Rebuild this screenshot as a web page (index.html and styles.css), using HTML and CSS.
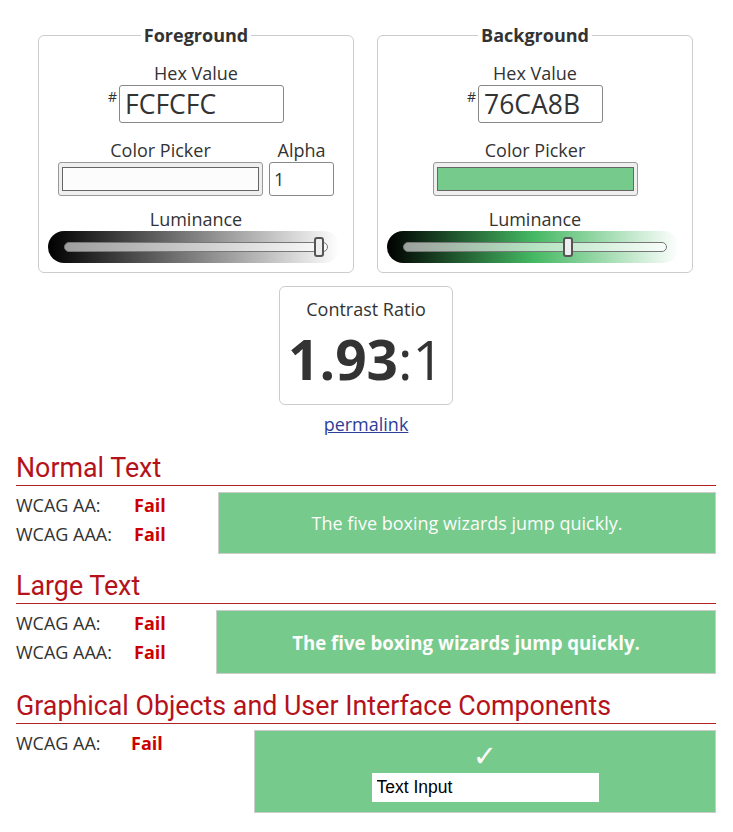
FILE: index.html
```html
<!DOCTYPE html>
<html lang="en">
<head>
<meta charset="utf-8">
<title>Contrast Checker</title>
<link rel="stylesheet" href="styles.css">
</head>
<body>
<div class="pickers">
  <fieldset class="panel">
    <legend class="panel-legend">Foreground</legend>
    <div class="field-label">Hex Value</div>
    <div class="hex-row">
      <span class="hash">#</span>
      <input class="hex-input hex-wide" type="text" value="FCFCFC">
    </div>
    <div class="picker-row">
      <div class="picker-col">
        <div class="field-label">Color Picker</div>
        <div class="swatch-frame"><div class="swatch swatch-fg"></div></div>
      </div>
      <div class="picker-col">
        <div class="field-label">Alpha</div>
        <input class="alpha-input" type="text" value="1">
      </div>
    </div>
    <div class="lum-block">
      <div class="field-label">Luminance</div>
      <div class="lum-track lum-fg">
        <input class="lum-range" type="range" min="0" max="100" value="99">
      </div>
    </div>
  </fieldset>
  <fieldset class="panel">
    <legend class="panel-legend">Background</legend>
    <div class="field-label">Hex Value</div>
    <div class="hex-row">
      <span class="hash">#</span>
      <input class="hex-input hex-narrow" type="text" value="76CA8B">
    </div>
    <div class="picker-row">
      <div class="picker-col">
        <div class="field-label">Color Picker</div>
        <div class="swatch-frame"><div class="swatch swatch-bg"></div></div>
      </div>
    </div>
    <div class="lum-block">
      <div class="field-label">Luminance</div>
      <div class="lum-track lum-bg">
        <input class="lum-range" type="range" min="0" max="100" value="63">
      </div>
    </div>
  </fieldset>
</div>

<div class="ratio-box">
  <div class="ratio-label">Contrast Ratio</div>
  <div class="ratio-value"><span class="ratio-bold">1.93</span>:1</div>
</div>
<div class="permalink-wrap"><a class="permalink" href="#">permalink</a></div>

<h2 class="section-title">Normal Text</h2>
<div class="result-row">
  <div class="results">
    <span>WCAG AA:</span><span class="fail">Fail</span>
    <span>WCAG AAA:</span><span class="fail">Fail</span>
  </div>
  <div class="preview preview-normal">The five boxing wizards jump quickly.</div>
</div>

<h2 class="section-title">Large Text</h2>
<div class="result-row">
  <div class="results">
    <span>WCAG AA:</span><span class="fail">Fail</span>
    <span>WCAG AAA:</span><span class="fail">Fail</span>
  </div>
  <div class="preview preview-large">The five boxing wizards jump quickly.</div>
</div>

<h2 class="section-title">Graphical Objects and User Interface Components</h2>
<div class="result-row">
  <div class="results results-narrow">
    <span>WCAG AA:</span><span class="fail">Fail</span>
  </div>
  <div class="preview preview-graphic">
    <div class="check">✓</div>
    <input class="text-input" type="text" value="Text Input">
  </div>
</div>
</body>
</html>
```
FILE: styles.css
```css
body {
  margin: 0;
  padding: 23px 17px 0 16px;
  font-family: "Open Sans", "Liberation Sans", sans-serif;
  color: #333;
  background: #fff;
}

.pickers {
  display: flex;
  justify-content: center;
  gap: 23px;
  padding-right: 1px;
}

.panel {
  width: 316px;
  box-sizing: border-box;
  margin: 0;
  min-width: 0;
  padding: 14px 11px 9px;
  border: 1px solid #ccc;
  border-radius: 6px;
  display: flex;
  flex-direction: column;
  align-items: center;
}

.panel-legend {
  margin: 0 auto;
  padding: 0 3px;
  font-weight: 700;
  font-size: 18px;
  line-height: 24px;
  color: #333;
}

.field-label {
  font-size: 18px;
  line-height: 24px;
  text-align: center;
}

.hex-row {
  display: flex;
  align-items: flex-start;
  gap: 2px;
}

.hash {
  font-size: 14px;
  line-height: 14px;
  margin-top: 5px;
}

.hex-input {
  height: 38px;
  box-sizing: border-box;
  border: 1px solid #888;
  border-radius: 3px;
  padding: 0 5px;
  margin: 0;
  font-family: "Open Sans", sans-serif;
  font-size: 26.5px;
  color: #333;
  background: #fff;
}

.hex-wide { width: 165px; }
.hex-narrow { width: 125px; }

.picker-row {
  margin-top: 15px;
  display: flex;
  gap: 6px;
  align-items: flex-end;
}

.picker-col {
  display: flex;
  flex-direction: column;
  align-items: center;
}

.swatch-frame {
  width: 205px;
  height: 34px;
  box-sizing: border-box;
  border: 1px solid #999;
  border-radius: 3px;
  background: #efefef;
  padding: 4px 3px;
}

.swatch {
  height: 100%;
  box-sizing: border-box;
  border: 1px solid #666;
}

.swatch-fg { background: #fcfcfc; }
.swatch-bg { background: #76ca8b; }

.alpha-input {
  width: 65px;
  height: 34px;
  box-sizing: border-box;
  border: 1px solid #888;
  border-radius: 3px;
  padding: 0 4px;
  margin: 0;
  font-family: "Open Sans", sans-serif;
  font-size: 18px;
  color: #333;
  background: #fff;
}

.lum-block {
  margin-top: 11px;
  display: flex;
  flex-direction: column;
  align-items: center;
}

.lum-track {
  width: 292px;
  height: 32px;
  box-sizing: border-box;
  margin: 0 2px 0 -2px;
  border-radius: 16px;
  padding: 0 12px 0 16px;
  display: flex;
  align-items: center;
}

.lum-fg { background: linear-gradient(to right, #000 0%, #fff 100%); }
.lum-bg { background: linear-gradient(to right, #000 0%, #44b862 50%, #fff 100%); }

.lum-range {
  -webkit-appearance: none;
  appearance: none;
  width: 100%;
  height: 20px;
  margin: 0;
  background: transparent;
}

.lum-range::-webkit-slider-runnable-track {
  height: 10px;
  box-sizing: border-box;
  border: 1px solid #777;
  border-radius: 5px;
  background: rgba(255, 255, 255, 0.6);
}

.lum-range::-webkit-slider-thumb {
  -webkit-appearance: none;
  appearance: none;
  width: 10px;
  height: 20px;
  margin-top: -6px;
  box-sizing: border-box;
  border: 2px solid #555;
  border-radius: 3px;
  background: #eee;
}

.ratio-box {
  margin: 13px auto 0;
  width: 174px;
  box-sizing: border-box;
  border: 1px solid #ccc;
  border-radius: 6px;
  padding: 10px 0 17px;
  text-align: center;
}

.ratio-label {
  font-size: 18px;
  line-height: 24px;
}

.ratio-value {
  margin-top: 10px;
  font-size: 55px;
  line-height: 56px;
}

.ratio-bold { font-weight: 700; }

.permalink-wrap {
  margin-top: 7px;
  text-align: center;
  font-size: 18px;
  line-height: 24px;
}

.permalink { color: #2d3e99; }

.section-title {
  margin: 15px 0 0;
  font-family: Roboto, "Liberation Sans", sans-serif;
  font-weight: 400;
  font-size: 26.8px;
  line-height: 34px;
  color: #b5121b;
  border-bottom: 1px solid #b22222;
}

.result-row {
  display: flex;
  align-items: flex-start;
  margin-top: 6px;
}

.results {
  display: grid;
  grid-template-columns: 118px auto;
  font-size: 18px;
  line-height: 29px;
  margin-top: -1px;
}

.results-narrow { grid-template-columns: 115px auto; }

.fail {
  color: #c00;
  font-weight: 700;
}

.preview {
  margin-left: auto;
  box-sizing: border-box;
  border: 1px solid #ccc;
  background: #76ca8b;
  color: #fcfcfc;
  display: flex;
  align-items: center;
  justify-content: center;
  font-size: 18px;
}

.preview-normal { width: 498px; height: 62px; }
.preview-large { width: 500px; height: 64px; font-weight: 700; font-size: 18.67px; }

.preview-graphic {
  width: 462px;
  height: 83px;
  flex-direction: column;
  justify-content: flex-start;
  padding-top: 10px;
}

.check {
  font-family: "DejaVu Sans", sans-serif;
  font-weight: 700;
  font-size: 29px;
  line-height: 30px;
  color: #fcfcfc;
}

.text-input {
  margin-top: 2px;
  width: 227px;
  height: 29px;
  box-sizing: border-box;
  border: none;
  padding: 0 5px;
  font-family: "Liberation Sans", Arial, sans-serif;
  font-size: 17.5px;
  color: #000;
  background: #fff;
}
```
